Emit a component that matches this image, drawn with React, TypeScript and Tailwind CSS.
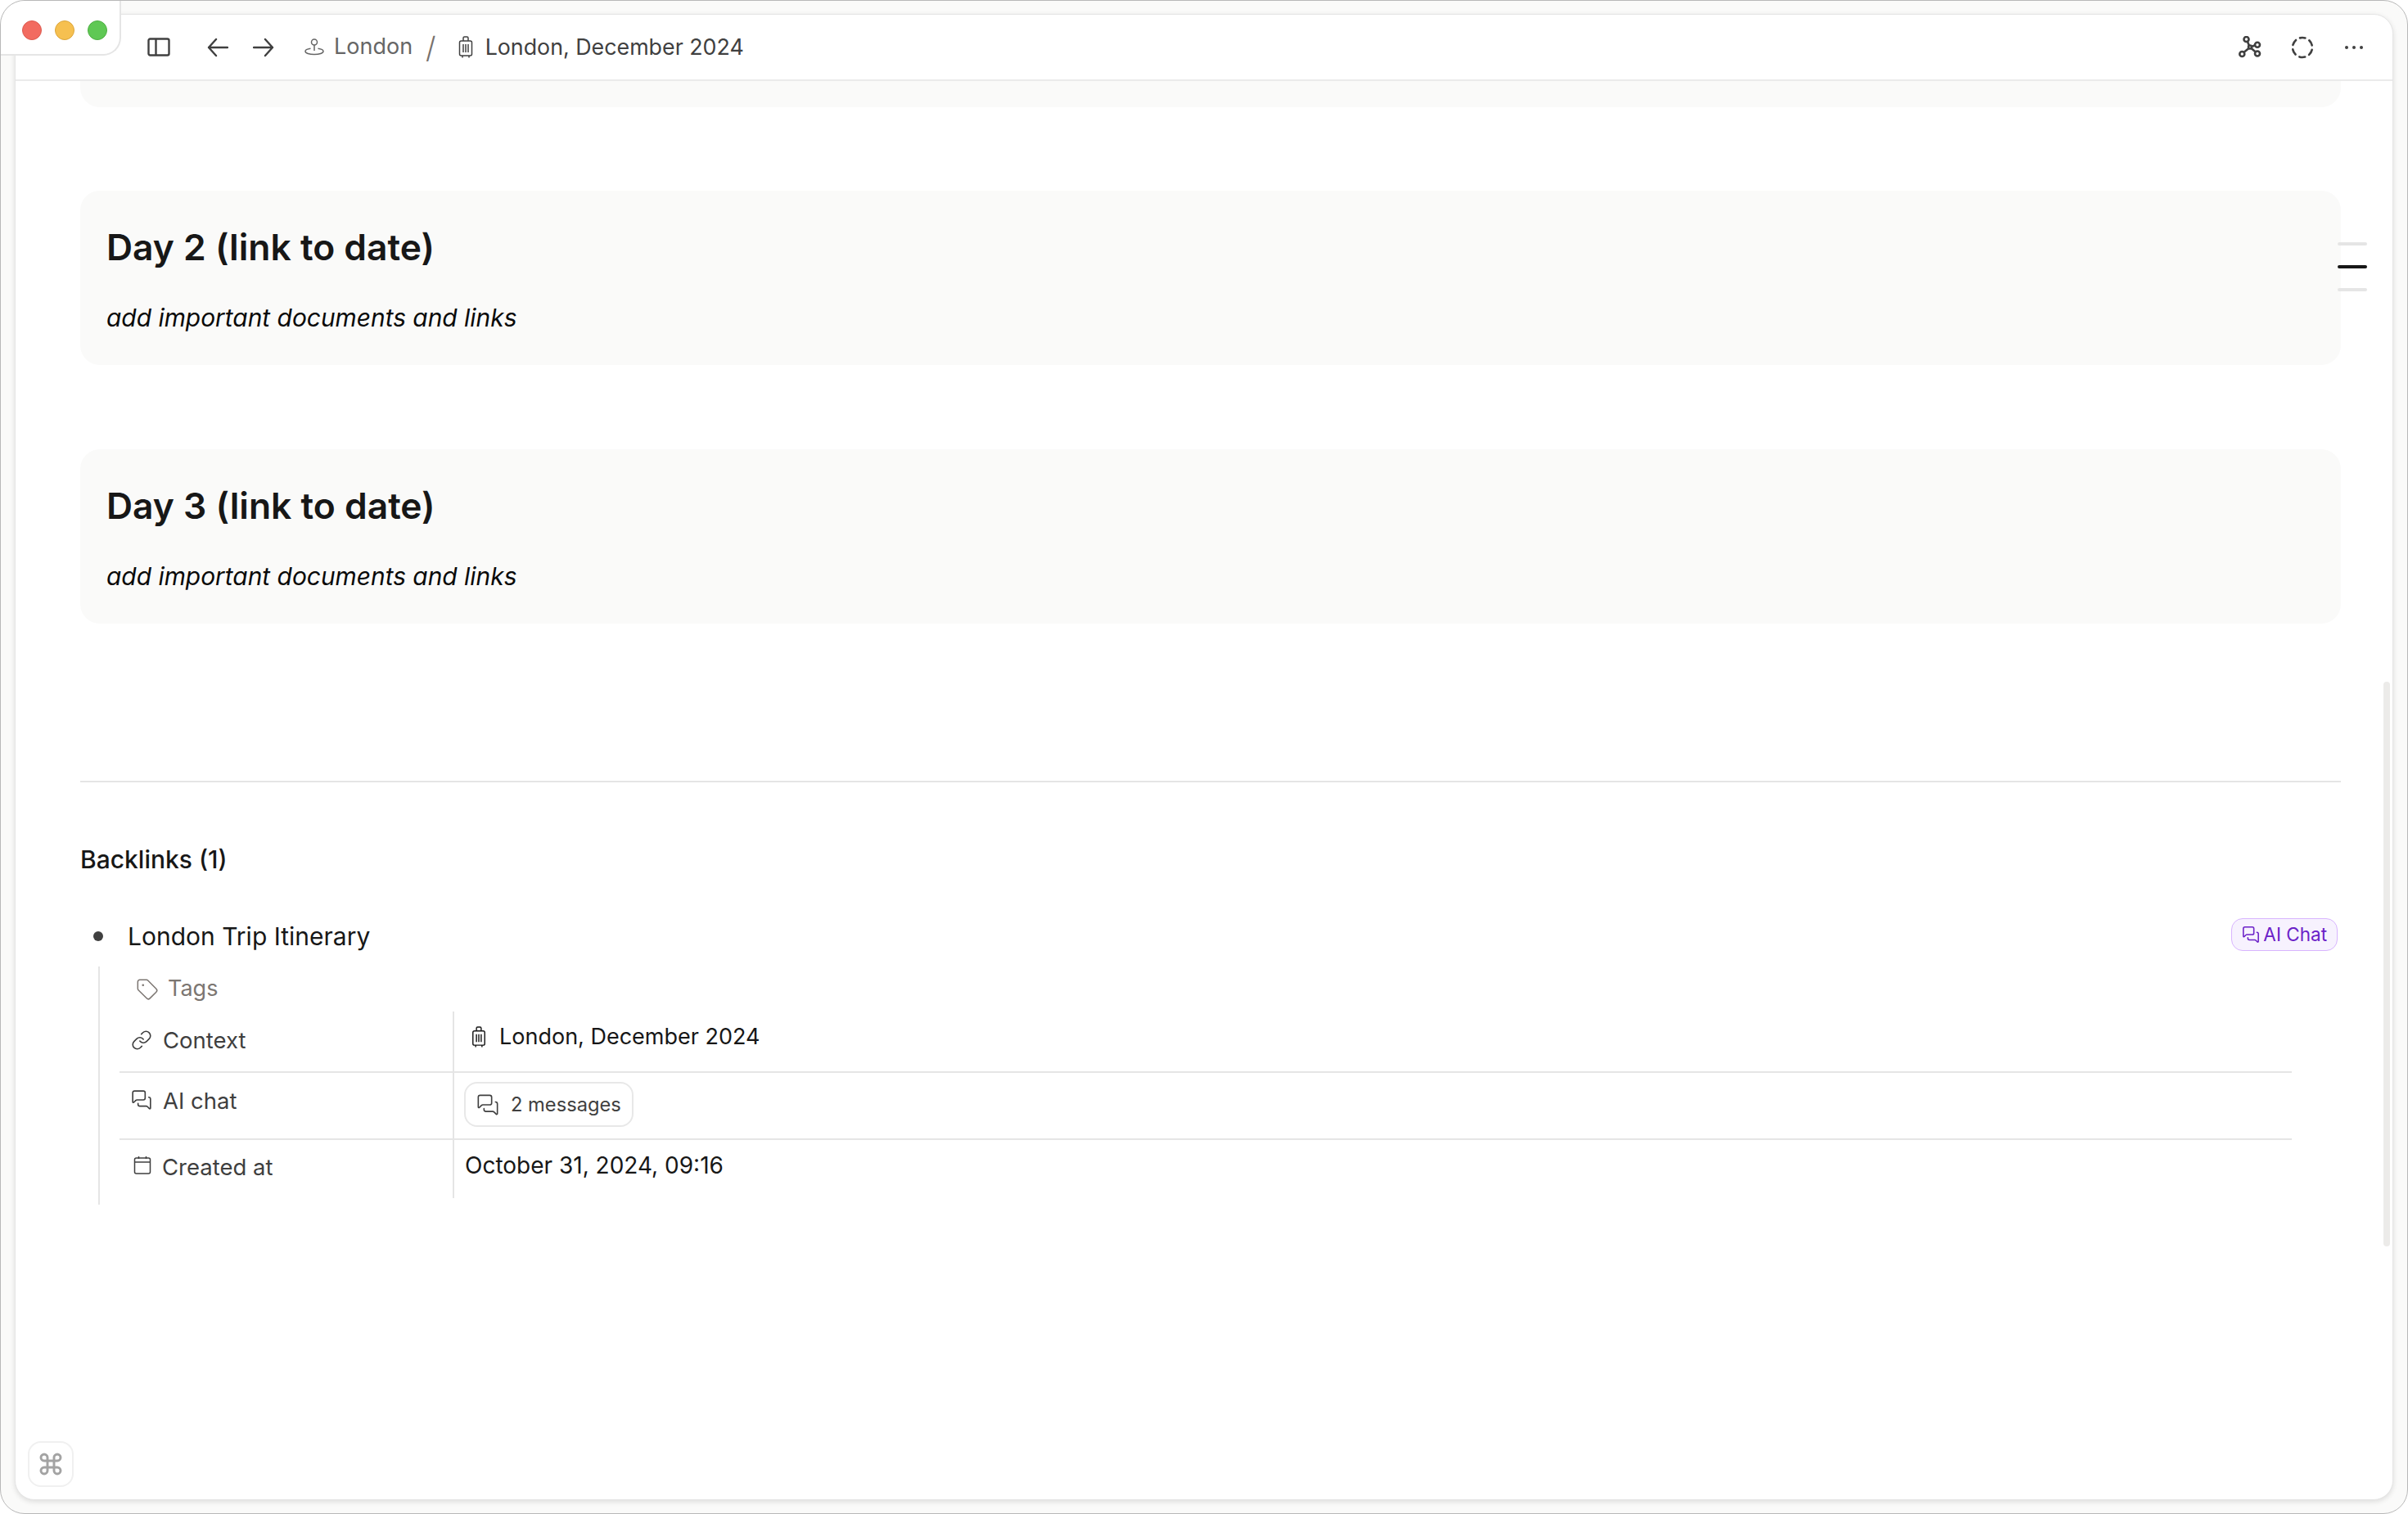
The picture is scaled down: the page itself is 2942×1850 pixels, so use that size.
import { Command, Link, MessagesSquare, Tag } from "lucide-react";

const Suitcase = ({ className = "" }: { className?: string }) => (
  <svg className={className} viewBox="0 0 18 27" fill="none" stroke="currentColor" strokeWidth="1.5">
    <rect x="1.500" y="6" width="15" height="18" rx="2" />
    <path d="M6 6V2.500a1.500 1.500 0 0 1 1.500-1.500h3A1.500 1.500 0 0 1 12 2.500V6" />
    <path d="M6 10v10M9 10v10M12 10v10M5 24v2.500M13 24v2.500" />
  </svg>
);

const Pin = ({ className = "" }: { className?: string }) => (
  <svg className={className} viewBox="0 0 24 21" fill="none" stroke="currentColor" strokeWidth="1.5">
    <circle cx="12" cy="4.500" r="3.500" />
    <path d="M12 8V15" />
    <path d="M7.500 12.300C3.500 12.900 1 14 1 15.700c0 2.200 4.900 3.800 11 3.800s11-1.600 11-3.800c0-1.700-2.500-2.800-6.500-3.400" />
  </svg>
);

const Nodes = ({ className = "" }: { className?: string }) => (
  <svg className={className} viewBox="0 0 28 27" fill="none" stroke="currentColor" strokeWidth="2.600">
    <circle cx="9.500" cy="4" r="3" />
    <circle cx="23" cy="10.700" r="3" />
    <circle cx="4.300" cy="22" r="3" />
    <circle cx="23" cy="21.500" r="3" />
    <circle cx="14" cy="13.500" r="2" />
    <path d="M11 7l2 5M20.200 11.300L16 13M6.400 20L12.500 15M20.800 19.500L15.500 15" />
  </svg>
);

const DashedCircle = ({ className = "" }: { className?: string }) => (
  <svg className={className} viewBox="0 0 28 28" fill="none" stroke="currentColor" strokeWidth="2.600" strokeLinecap="round">
    <circle cx="14" cy="14" r="12" strokeDasharray="7 5.560" strokeDashoffset="3.500" transform="rotate(-90 14 14)" />
  </svg>
);

const CalendarBox = ({ className = "" }: { className?: string }) => (
  <svg className={className} viewBox="0 0 22 24" fill="none" stroke="currentColor" strokeWidth="1.500">
    <rect x="1.500" y="3" width="19" height="19" rx="2" />
    <path d="M1.500 8h19M6.500 1v3M15.500 1v3" />
  </svg>
);

const SidebarToggle = ({ className = "" }: { className?: string }) => (
  <svg className={className} viewBox="0 0 28 23" fill="none" stroke="currentColor" strokeWidth="2.400">
    <rect x="1.500" y="1.500" width="25" height="20" rx="2" />
    <path d="M10.500 1.500v20" />
  </svg>
);

const BackArrow = ({ className = "" }: { className?: string }) => (
  <svg className={className} viewBox="0 0 26 24" fill="none" stroke="currentColor" strokeWidth="2.400" strokeLinecap="round" strokeLinejoin="round">
    <path d="M25 12H2M11 2L2 12l9 10" />
  </svg>
);

const NextArrow = ({ className = "" }: { className?: string }) => (
  <svg className={className} viewBox="0 0 26 24" fill="none" stroke="currentColor" strokeWidth="2.400" strokeLinecap="round" strokeLinejoin="round">
    <path d="M1 12h23M15 2l9 10-9 10" />
  </svg>
);

const DayCard = ({ title }: { title: string }) => (
  <div className="h-[213px] rounded-[24px] bg-[#fafaf9] px-[32px] pt-[41px]">
    <h2 className="text-[44.4px] leading-[56px] font-semibold text-[#171717]">{title}</h2>
    <p className="mt-[38px] text-[29.900px] leading-[40px] italic text-[#0a0a0a]">add important documents and links</p>
  </div>
);

const Label = ({ className, children }: { className: string; children: React.ReactNode }) => (
  <div className={`flex w-[409px] shrink-0 items-start border-r-2 border-[#e5e5e5] pl-[14px] text-[27.500px] leading-[32px] text-[#3f3f3f] ${className}`}>
    {children}
  </div>
);

export default function App() {
  return (
    <div className="relative h-[1850px] w-[2942px] overflow-hidden rounded-[30px] border border-[#b8b8b8] bg-[#fafaf9] pt-[16px] pr-[17px] pb-[16px] pl-[17px] font-['Inter',sans-serif]">
      <div className="relative flex h-full flex-col overflow-hidden rounded-[24px] border border-[#e5e5e5] bg-white shadow-[0_2px_6px_rgba(0,0,0,0.12)]">
        <header className="flex h-[81px] shrink-0 items-center border-b-2 border-[#ebebeb] pl-[161px] pr-[36px] text-[#404040]">
          <SidebarToggle className="h-[23px] w-[28px]" />
          <BackArrow className="ml-[45px] h-[24px] w-[26px]" />
          <NextArrow className="ml-[30px] h-[24px] w-[26px]" />
          <Pin className="ml-[37px] h-[21px] w-[24px] text-[#666666]" />
          <span className="ml-[12px] text-[27px] text-[#666666]">London</span>
          <span className="ml-[16px] text-[36px] leading-none font-light text-[#78716c]">/</span>
          <Suitcase className="ml-[27px] h-[27px] w-[18px]" />
          <span className="ml-[15px] text-[26.800px]">London, December 2024</span>
          <Nodes className="ml-auto h-[27px] w-[28px]" />
          <DashedCircle className="ml-[36px] h-[28px] w-[28px]" />
          <div className="ml-[38px] flex gap-[5px]">
            <span className="h-[4px] w-[4px] rounded-full bg-[#404040]" />
            <span className="h-[4px] w-[4px] rounded-full bg-[#404040]" />
            <span className="h-[4px] w-[4px] rounded-full bg-[#404040]" />
          </div>
        </header>

        <main className="flex-1 pl-[79px] pr-[63px]">
          <div className="h-[32px] rounded-b-[24px] bg-[#fafaf9]" />
          <div className="mt-[102px]">
            <DayCard title="Day 2 (link to date)" />
          </div>
          <div className="mt-[103px]">
            <DayCard title="Day 3 (link to date)" />
          </div>
          <div className="mt-[192px] h-[2px] bg-[#e5e5e5]" />

          <h3 className="mt-[76px] text-[30px] leading-[36px] font-medium text-[#171717]">Backlinks (1)</h3>

          <div className="mt-[54px] flex h-[44px] items-center">
            <span className="ml-[16px] h-[12px] w-[12px] rounded-full bg-[#404040]" />
            <span className="ml-[30px] text-[30px] text-[#171717]">London Trip Itinerary</span>
            <span className="mr-[4px] mb-[4px] ml-auto flex h-[40px] items-center gap-[4px] rounded-[14px] border border-[#d8b4fe] bg-[#f7f2fe] px-[12px] text-[22.500px] text-[#6b21c8]">
              <MessagesSquare className="h-[22px] w-[22px]" strokeWidth={1.7} />
              AI Chat
            </span>
          </div>

          <div className="ml-[22px] mr-[60px] mt-[15px] border-l-2 border-[#e5e5e5] pl-[24px] pb-[8px]">
            <div className="flex h-[55px] items-start gap-[11px] pl-[20px] pt-[11px] text-[27px] leading-[32px] text-[#7c7672]">
              <Tag className="mt-[3px] h-[28px] w-[28px]" strokeWidth={1.3} />
              Tags
            </div>
            <div className="flex h-[73px]">
              <Label className="pt-[19px]">
                <Link className="mt-[3px] mr-[13px] h-[26px] w-[26px]" strokeWidth={1.5} />
                Context
              </Label>
              <div className="flex items-start gap-[16px] pl-[21px] pt-[15px] text-[27px] leading-[32px] text-[#171717]">
                <Suitcase className="mt-[3px] h-[26px] w-[18px]" />
                London, December 2024
              </div>
            </div>
            <div className="flex h-[82px] border-t-2 border-[#e5e5e5]">
              <Label className="pt-[18px]">
                <MessagesSquare className="mt-[2px] mr-[13px] h-[26px] w-[26px]" strokeWidth={1.5} />
                AI chat
              </Label>
              <div className="pt-[11px] pl-[12px]">
                <div className="flex h-[55px] items-center gap-[14px] rounded-[16px] border-2 border-[#e8e8e8] px-[13px] text-[23.700px] text-[#404040]">
                  <MessagesSquare className="h-[28px] w-[28px]" strokeWidth={1.4} />
                  2 messages
                </div>
              </div>
            </div>
            <div className="flex h-[73px] border-t-2 border-[#e5e5e5]">
              <Label className="pt-[17px]">
                <CalendarBox className="mt-[2px] ml-[2px] mr-[12px] h-[24px] w-[24px]" />
                Created at
              </Label>
              <div className="pt-[13px] pl-[13px] text-[28px] leading-[36px] text-[#171717]">October 31, 2024, 09:16</div>
            </div>
          </div>
        </main>

        <div className="absolute top-[278px] left-[2837px] flex w-[36px] flex-col gap-[24px]">
          <span className="h-[4px] rounded-full bg-[#e5e5e5]" />
          <span className="h-[4px] rounded-full bg-[#171717]" />
          <span className="h-[4px] rounded-full bg-[#e5e5e5]" />
        </div>

        <div className="absolute top-[815px] right-[3px] h-[690px] w-[8px] rounded-full bg-[#ecebe9]" />

        <div className="absolute bottom-[15px] left-[15px] flex h-[56px] w-[56px] items-center justify-center rounded-[16px] border-2 border-[#f0f0f0] bg-white text-[#a3a3a3]">
          <Command className="h-[32px] w-[32px]" strokeWidth={2.2} />
        </div>
      </div>

      <div className="absolute top-0 left-0 flex h-[67px] w-[147px] items-center gap-[16px] rounded-br-[22px] rounded-tl-[30px] border-r-2 border-b-2 border-[#e5e5e5] bg-white pl-[26px] pt-[6px]">
        <span className="h-[24px] w-[24px] rounded-full border border-[#dc5a4f] bg-[#f26b60]" />
        <span className="h-[24px] w-[24px] rounded-full border border-[#dba53a] bg-[#f6c050]" />
        <span className="h-[24px] w-[24px] rounded-full border border-[#4eae43] bg-[#5fc854]" />
      </div>
    </div>
  );
}
